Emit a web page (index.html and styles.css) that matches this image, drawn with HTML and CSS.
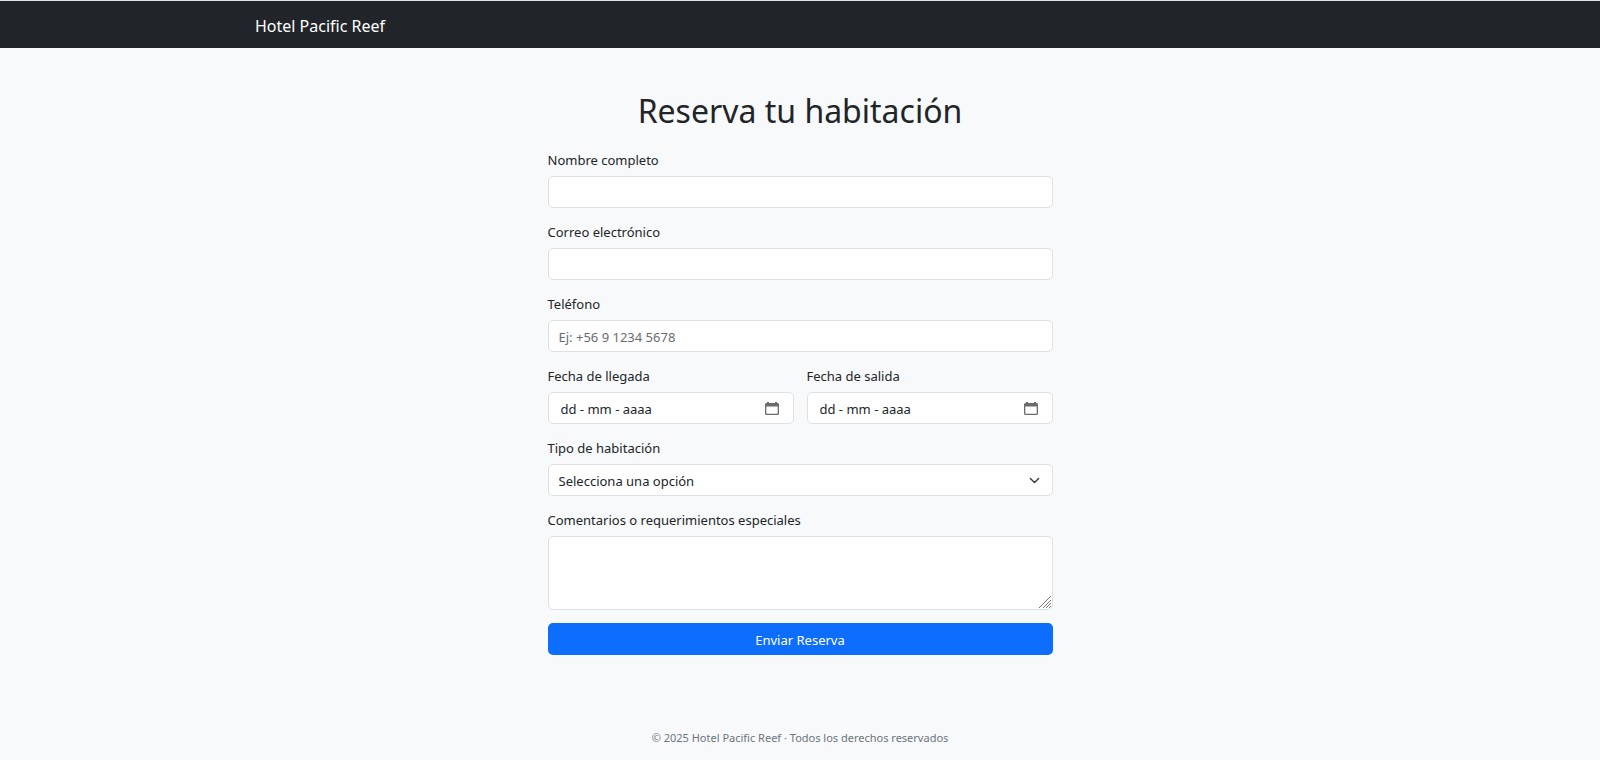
FILE: index.html
```html
<!DOCTYPE html>
<html lang="es">
<head>
<meta charset="utf-8">
<meta name="viewport" content="width=device-width, initial-scale=1">
<title>Hotel Pacific Reef</title>
<link rel="stylesheet" href="styles.css">
</head>
<body>
<header class="navbar">
  <div class="container"><a class="brand" href="#">Hotel Pacific Reef</a></div>
</header>
<main class="main">
  <h1 class="title">Reserva tu habitación</h1>
  <form class="form">
    <div class="field">
      <label class="label" for="nombre">Nombre completo</label>
      <input class="control" type="text" id="nombre">
    </div>
    <div class="field">
      <label class="label" for="correo">Correo electrónico</label>
      <input class="control" type="email" id="correo">
    </div>
    <div class="field">
      <label class="label" for="telefono">Teléfono</label>
      <input class="control" type="tel" id="telefono" placeholder="Ej: +56 9 1234 5678">
    </div>
    <div class="row">
      <div class="field">
        <label class="label" for="llegada">Fecha de llegada</label>
        <div class="control date">
          <input class="date-input" type="text" id="llegada" placeholder="dd - mm - aaaa">
          <button class="date-button" type="button" aria-label="Elegir fecha de llegada">
            <svg class="icon" viewBox="0 0 14 14"><path d="M2 0h2v1h6V0h2v1h.500A1.500 1.500 0 0 1 14 2.500v9a1.500 1.500 0 0 1-1.500 1.500h-11A1.500 1.500 0 0 1 0 11.500V2.500A1.500 1.500 0 0 1 1.500 1H2zM1.300 4.500v7.200h11.400V4.500z" fill="#696b6d" fill-rule="evenodd"/></svg>
          </button>
        </div>
      </div>
      <div class="field">
        <label class="label" for="salida">Fecha de salida</label>
        <div class="control date">
          <input class="date-input" type="text" id="salida" placeholder="dd - mm - aaaa">
          <button class="date-button" type="button" aria-label="Elegir fecha de salida">
            <svg class="icon" viewBox="0 0 14 14"><path d="M2 0h2v1h6V0h2v1h.500A1.500 1.500 0 0 1 14 2.500v9a1.500 1.500 0 0 1-1.500 1.500h-11A1.500 1.500 0 0 1 0 11.500V2.500A1.500 1.500 0 0 1 1.500 1H2zM1.300 4.500v7.200h11.400V4.500z" fill="#696b6d" fill-rule="evenodd"/></svg>
          </button>
        </div>
      </div>
    </div>
    <div class="field">
      <label class="label" for="tipo">Tipo de habitación</label>
      <select class="control select" id="tipo"><option>Selecciona una opción</option></select>
    </div>
    <div class="field">
      <label class="label" for="comentarios">Comentarios o requerimientos especiales</label>
      <textarea class="control textarea" id="comentarios"></textarea>
    </div>
    <button class="submit" type="submit">Enviar Reserva</button>
  </form>
</main>
<footer class="footer">© 2025 Hotel Pacific Reef · Todos los derechos reservados</footer>
</body>
</html>
```
FILE: styles.css
```css
* { box-sizing: border-box; }
body {
  margin: 0;
  background: #f8f9fa;
  color: #212529;
  font: 13px/20px "Segoe UI", "Noto Sans", sans-serif;
}
.navbar {
  background: #212529;
  border-top: 1px solid #dee2e6;
  padding: 11px 0 8px;
}
.container {
  max-width: 1114px;
  margin: 0 auto;
  padding: 0 12px;
}
.brand {
  display: block;
  width: max-content;
  color: #fff;
  font-size: 16px;
  line-height: 28px;
  text-decoration: none;
}
.main {
  max-width: 529px;
  margin: 0 auto;
  padding: 42px 12px 40px;
}
.title {
  margin: 0 0 17px;
  font-size: 32px;
  font-weight: 400;
  line-height: 42px;
  text-align: center;
}
.form, .field { display: flex; flex-direction: column; }
.form { gap: 13px; }
.field { gap: 6px; }
.row {
  display: grid;
  grid-template-columns: 1fr 1fr;
  gap: 13px;
}
.label { padding-top: 1px; }
.control {
  width: 100%;
  height: 32px;
  margin: 0;
  padding: 1px 10px 0;
  border: 1px solid #dee2e6;
  border-radius: 5px;
  background: #fff;
  color: #212529;
  font: inherit;
}
.control::placeholder { color: #686c71; opacity: 1; }
.date {
  display: flex;
  align-items: center;
  padding: 1px 14px 0 12px;
}
.date-input {
  flex: 1;
  min-width: 0;
  padding: 0;
  border: 0;
  background: none;
  color: inherit;
  font: inherit;
}
.date-input::placeholder { color: #212529; opacity: 1; }
.date-button {
  display: flex;
  padding: 0;
  border: 0;
  background: none;
}
.icon { width: 14px; height: 14px; }
.select {
  appearance: none;
  background: #fff url("data:image/svg+xml,%3Csvg xmlns='http://www.w3.org/2000/svg' viewBox='0 0 16 16'%3E%3Cpath fill='none' stroke='%23343a40' stroke-linecap='round' stroke-linejoin='round' stroke-width='2' d='m2 5 6 6 6-6'/%3E%3C/svg%3E") no-repeat right 12px center / 11px 11px;
}
.textarea {
  display: block;
  height: 74px;
  padding: 5px 10px;
  resize: vertical;
}
.textarea::-webkit-resizer {
  background: url("data:image/svg+xml,%3Csvg xmlns='http://www.w3.org/2000/svg' viewBox='0 0 15 15'%3E%3Cpath fill='none' stroke='%23777' d='M2 14 14 2M6 14l8-8M9 14l5-5M12 14l2-2'/%3E%3C/svg%3E") no-repeat right bottom / 15px 15px;
}
.submit {
  height: 32px;
  padding: 1px 10px 0;
  border: 0;
  border-radius: 5px;
  background: #0d6efd;
  color: #fff;
  font: inherit;
}
.footer {
  padding: 34px 12px 12px;
  color: #6c757d;
  font-size: 11px;
  line-height: 18px;
  text-align: center;
}
```
